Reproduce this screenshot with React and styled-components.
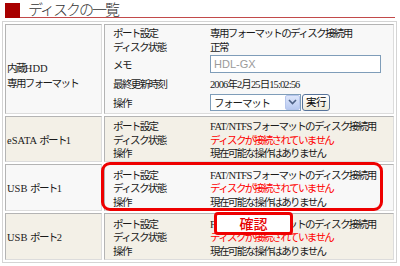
import React from "react";
import styled, { createGlobalStyle } from "styled-components";

const GlobalStyle = createGlobalStyle`
  * { box-sizing: border-box; }
  body {
    margin: 0;
    background: #fff;
    font-family: "Liberation Serif", "Noto Sans CJK JP", serif;
    font-size: 10.5px;
    color: #1a1a1a;
    letter-spacing: -1.6px;
  }
`;

const Page = styled("div")({
  width: 400,
  height: 266,
  overflow: "hidden",
});

const Header = styled("div")({
  display: "flex",
  alignItems: "flex-end",
  margin: "0 5px",
});

const Mark = styled("div")({
  width: 15,
  height: 15,
  backgroundColor: "#a80000",
});

const Title = styled("h1")({
  flex: 1,
  margin: 0,
  paddingLeft: 8,
  fontFamily: '"Noto Sans CJK JP", sans-serif',
  fontWeight: 300,
  fontSize: 15,
  lineHeight: "17px",
  color: "#333",
  letterSpacing: -2,
  borderBottom: "1px solid #c24a4a",
});

// latin runs keep (nearly) normal spacing
const Latin = styled("span")`
  letter-spacing: ${({ $ls }) => $ls ?? 0}px;
`;

const TableWrap = styled("div")({
  position: "relative",
  marginTop: 3,
  marginLeft: 2,
});

const Table = styled("table")({
  width: 395,
  borderCollapse: "separate",
  borderSpacing: 2,
  border: "1px solid #d4d4d4",
});

const Cell = styled("td")`
  height: ${({ $h }) => $h}px;
  padding: 0;
  vertical-align: middle;
  background-color: ${({ $alt }) => ($alt ? "#f3f0e7" : "#f8f8f8")};
  border: 1px solid;
  border-color: #b4b4b4 #dcdcdc #dcdcdc #b4b4b4;
`;

const NameCell = styled(Cell)`
  width: 97px;
  padding: ${({ $pt }) => $pt || 0}px 0 0 1px;
`;

const Details = styled("div")({
  display: "grid",
  gridTemplateColumns: "97px 1fr",
  paddingLeft: 8,
  alignItems: "center",
});

const Label = styled("div")`
  height: ${({ $h }) => $h || 13.5}px;
  display: flex;
  align-items: center;
`;

const Value = styled(Label)`
  color: ${({ $warn }) => ($warn ? "#ff0000" : "#1a1a1a")};
  gap: 1px;
`;

const MemoInput = styled("input")({
  width: 171,
  height: 18,
  border: "1px solid #7f9db9",
  padding: "0 3px",
  fontFamily: '"Liberation Sans", sans-serif',
  fontSize: 11,
  color: "#9a9a9a",
  background: "#fff",
  letterSpacing: 0,
});

const Select = styled("div")({
  width: 91,
  height: 17,
  border: "1px solid #7f9db9",
  background: "#fff",
  display: "flex",
  alignItems: "center",
  justifyContent: "space-between",
  paddingLeft: 3,
  fontFamily: '"Noto Sans CJK JP", sans-serif',
  letterSpacing: -1.2,
});

const Arrow = styled("span")({
  width: 15,
  height: 15,
  background: "linear-gradient(#dde6fb, #b8c9f0)",
  border: "1px solid #b6c6ec",
  borderRadius: 2,
  display: "flex",
  alignItems: "center",
  justifyContent: "center",
});

const RunButton = styled("button")({
  height: 17,
  padding: "0 3px",
  border: "1px solid #56739a",
  borderRadius: 3,
  background: "linear-gradient(#ffffff, #ece9d8)",
  fontFamily: '"Noto Sans CJK JP", sans-serif',
  fontSize: 10.5,
  lineHeight: "14px",
  letterSpacing: -0.5,
  color: "#000",
});

const Highlight = styled("div")({
  position: "absolute",
  left: 99,
  top: 141,
  width: 282,
  height: 49,
  border: "3px solid #ee0000",
  borderRadius: 9,
  pointerEvents: "none",
});

const Badge = styled("div")({
  position: "absolute",
  left: 212,
  top: 191,
  width: 79,
  height: 23,
  border: "3px solid #ee0000",
  borderRadius: 4,
  background: "#fff",
  color: "#e60000",
  fontFamily: '"Noto Sans CJK JP", sans-serif',
  fontSize: 14,
  lineHeight: "17px",
  fontWeight: 500,
  letterSpacing: 0,
  display: "flex",
  alignItems: "center",
  justifyContent: "center",
});

const ports = [
  { name: "eSATA", no: "1", alt: true, h: 46 },
  { name: "USB", no: "1", alt: false, h: 47 },
  { name: "USB", no: "2", alt: true, h: 47 },
];

function PortDetails() {
  return (
    <Details>
      <Label>ポート設定</Label>
      <Value>
        <span>
          <Latin $ls={-0.6}>FAT/NTFS</Latin>フォーマットのディスク接続用
        </span>
      </Value>
      <Label>ディスク状態</Label>
      <Value $warn>ディスクが接続されていません</Value>
      <Label>操作</Label>
      <Value>現在可能な操作はありません</Value>
    </Details>
  );
}

export default function App() {
  return (
    <Page>
      <GlobalStyle />
      <Header>
        <Mark />
        <Title>ディスクの一覧</Title>
      </Header>
      <TableWrap>
        <Table>
          <tbody>
            <tr>
              <NameCell $h={88} $pt={12}>
                内蔵<Latin>HDD</Latin>
                <br />
                専用フォーマット
              </NameCell>
              <Cell $h={88}>
                <Details>
                  <Label $h={14}>ポート設定</Label>
                  <Value $h={14}>専用フォーマットのディスク接続用</Value>
                  <Label $h={14}>ディスク状態</Label>
                  <Value $h={14}>正常</Value>
                  <Label $h={22}>メモ</Label>
                  <Value $h={22}>
                    <MemoInput defaultValue="HDL-GX" />
                  </Value>
                  <Label $h={16}>最終更新時刻</Label>
                  <Value $h={16}>
                    <Latin $ls={-0.9}>2006年2月25日15:02:56</Latin>
                  </Value>
                  <Label $h={22}>操作</Label>
                  <Value $h={22}>
                    <Select>
                      フォーマット
                      <Arrow>
                        <svg width="9" height="6" viewBox="0 0 9 6">
                          <path d="M1 1l3.5 3.5L8 1" fill="none" stroke="#4d6185" strokeWidth="1.6" />
                        </svg>
                      </Arrow>
                    </Select>
                    <RunButton>実行</RunButton>
                  </Value>
                </Details>
              </Cell>
            </tr>
            {ports.map((p, i) => (
              <tr key={i}>
                <NameCell $h={p.h} $alt={p.alt}>
                  <Latin>{p.name} </Latin>ポート<Latin>{p.no}</Latin>
                </NameCell>
                <Cell $h={p.h} $alt={p.alt}>
                  <PortDetails />
                </Cell>
              </tr>
            ))}
          </tbody>
        </Table>
        <Highlight />
        <Badge>確認</Badge>
      </TableWrap>
    </Page>
  );
}
